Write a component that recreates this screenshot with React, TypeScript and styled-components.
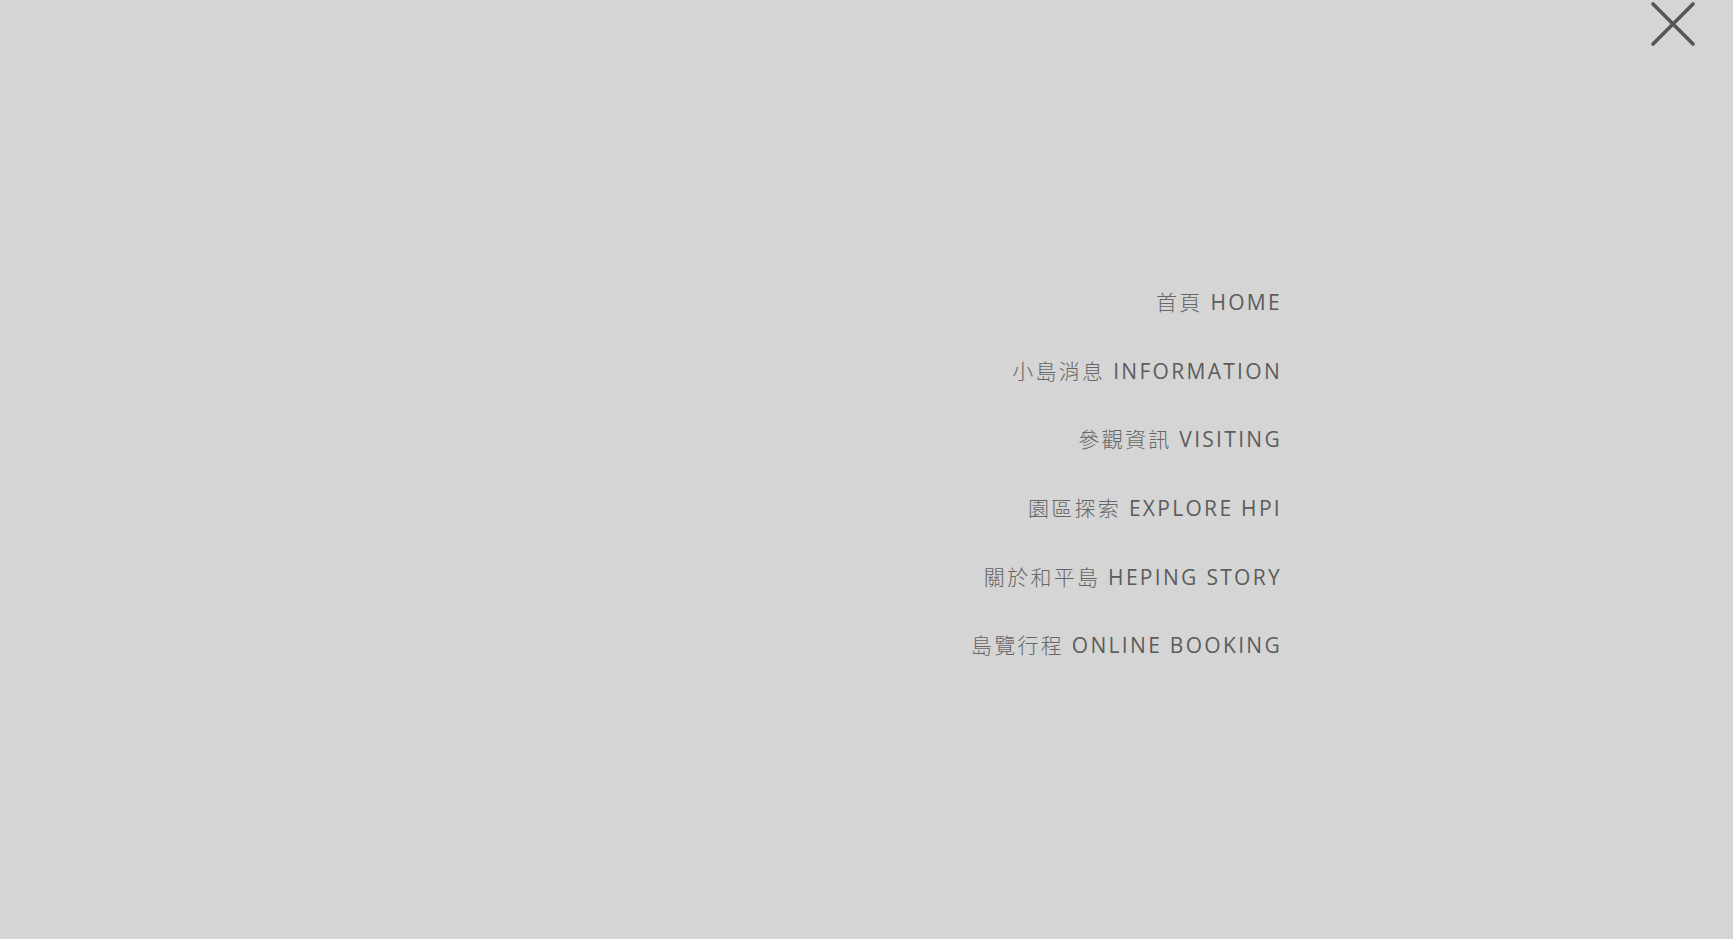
import React from "react";
import styled, { createGlobalStyle } from "styled-components";

const Global = createGlobalStyle`
  html, body { margin: 0; padding: 0; background: #d5d5d5; }
  body { font-family: "Open Sans", "Noto Sans CJK TC", sans-serif; }
`;

const Overlay = styled.div`
  position: relative;
  width: 100vw;
  height: 100vh;
  background: #d5d5d5;
  box-sizing: border-box;
  display: flex;
  justify-content: flex-end;
  padding: 274px 451px 0 0;
`;

const Menu = styled.nav`
  display: flex;
  flex-direction: column;
  align-items: flex-end;
`;

const Item = styled.a`
  display: block;
  height: 68.7px;
  line-height: 54px;
  font-family: "Open Sans", "Noto Sans CJK TC", sans-serif;
  font-size: 21px;
  font-weight: 400;
  letter-spacing: 2.3px;
  color: #5c5c5c;
  text-decoration: none;
  white-space: nowrap;
`;

const Zh = styled.span`
  font-family: "Noto Sans CJK TC", sans-serif;
  font-weight: 300;
  color: #666;
`;

const Close = styled.button`
  position: absolute;
  top: 0;
  right: 37px;
  width: 46px;
  height: 48px;
  padding: 0;
  border: 0;
  background: transparent;
  cursor: pointer;
  svg { display: block; }
`;

const items = [
  ["首頁", "HOME"],
  ["小島消息", "INFORMATION"],
  ["參觀資訊", "VISITING"],
  ["園區探索", "EXPLORE HPI"],
  ["關於和平島", "HEPING STORY"],
  ["島覽行程", "ONLINE BOOKING"],
];

export default function App() {
  return (
    <>
      <Global />
      <Overlay>
        <Close aria-label="close">
          <svg width="46" height="48" viewBox="0 0 46 48">
            <path d="M3 4 L43 44 M43 4 L3 44" stroke="#555" strokeWidth="3.6" strokeLinecap="round" fill="none" />
          </svg>
        </Close>
        <Menu>
          {items.map(([zh, en]) => (
            <Item href="#" key={en}>
              <Zh>{zh}</Zh> {en}
            </Item>
          ))}
        </Menu>
      </Overlay>
    </>
  );
}
